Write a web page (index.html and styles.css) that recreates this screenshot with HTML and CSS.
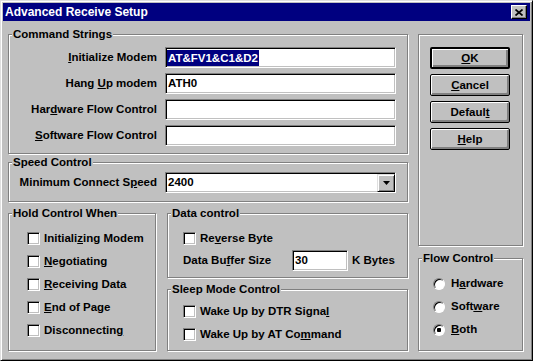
FILE: index.html
```html
<!DOCTYPE html>
<html lang="en">
<head>
  <meta charset="UTF-8" />
  <title>Advanced Receive Setup</title>
  <link rel="stylesheet" href="styles.css">
</head>
<body>

  <div class="window">
    <div class="titlebar">
      <span class="title">Advanced Receive Setup</span>
      <button class="close" type="button">
        <svg width="8" height="7" viewBox="0 0 8 7"><path d="M0.5 0.5 L7.5 6.5 M7.5 0.5 L0.5 6.5" stroke="#000" stroke-width="1.7" fill="none"/></svg>
      </button>
    </div>

    <div class="dialog">
      <div class="col_left">

        <div class="group commands">
          <div class="group_title">Command Strings</div>
          <div class="form_rows">
            <div class="form_row">
              <label><u>I</u>nitialize Modem</label>
              <div class="field"><span class="selected">AT&amp;FV1&amp;C1&amp;D2</span></div>
            </div>
            <div class="form_row">
              <label>Hang <u>U</u>p modem</label>
              <div class="field">ATH0</div>
            </div>
            <div class="form_row">
              <label>Har<u>d</u>ware Flow Control</label>
              <div class="field"></div>
            </div>
            <div class="form_row">
              <label><u>S</u>oftware Flow Control</label>
              <div class="field"></div>
            </div>
          </div>
        </div>

        <div class="group speed">
          <div class="group_title">Speed Control</div>
          <div class="form_row">
            <label>Minimum Connect S<u>p</u>eed</label>
            <div class="field dropdown">
              <span>2400</span>
              <span class="drop_btn">
                <svg width="7" height="4" viewBox="0 0 7 4"><polygon points="0,0 7,0 3.5,4" fill="#000"/></svg>
              </span>
            </div>
          </div>
        </div>

        <div class="bottom_row">
          <div class="group hold">
            <div class="group_title">Hold Control When</div>
            <div class="check_list">
              <div class="check"><span class="box"></span><span>Initiali<u>z</u>ing Modem</span></div>
              <div class="check"><span class="box"></span><span><u>N</u>egotiating</span></div>
              <div class="check"><span class="box"></span><span><u>R</u>eceiving Data</span></div>
              <div class="check"><span class="box"></span><span><u>E</u>nd of Page</span></div>
              <div class="check"><span class="box"></span><span>Disconnectin<u>g</u></span></div>
            </div>
          </div>

          <div class="stack">
            <div class="group data">
              <div class="group_title">Data control</div>
              <div class="check_list">
                <div class="check"><span class="box"></span><span>Re<u>v</u>erse Byte</span></div>
                <div class="buffer_row">
                  <span class="buffer_label">Data Bu<u>f</u>fer Size</span>
                  <div class="field small">30</div>
                  <span class="unit">K Bytes</span>
                </div>
              </div>
            </div>

            <div class="group sleep">
              <div class="group_title">Sleep Mode Control</div>
              <div class="check_list">
                <div class="check"><span class="box"></span><span>Wake Up by DTR Signa<u>l</u></span></div>
                <div class="check"><span class="box"></span><span>Wake Up by AT Co<u>m</u>mand</span></div>
              </div>
            </div>
          </div>
        </div>

      </div>

      <div class="col_right">
        <div class="group buttons">
          <button class="btn btn_default" type="button"><u>O</u>K</button>
          <button class="btn" type="button"><u>C</u>ancel</button>
          <button class="btn" type="button">Defaul<u>t</u></button>
          <button class="btn" type="button"><u>H</u>elp</button>
        </div>

        <div class="group flow">
          <div class="group_title">Flow Control</div>
          <div class="check_list radios">
            <div class="check"><span class="radio"></span><span>H<u>a</u>rdware</span></div>
            <div class="check"><span class="radio"></span><span>Soft<u>w</u>are</span></div>
            <div class="check"><span class="radio checked"></span><span><u>B</u>oth</span></div>
          </div>
        </div>
      </div>
    </div>
  </div>

</body>
</html>
```

FILE: styles.css
```css
* {
  box-sizing: border-box;
}

body {
  margin: 0;
  padding: 0;
  background-color: #c0c0c0;
}

.window {
  width: 533px;
  height: 361px;
  display: flex;
  flex-direction: column;
  padding: 2px;
  background-color: #c0c0c0;
  border: 1px solid;
  border-color: #dfdfdf #000 #000 #dfdfdf;
  box-shadow: inset 1px 1px #fff, inset -1px -1px #808080;
  font: bold 11.5px/13px "Liberation Sans", Arial, sans-serif;
  color: #000;
}

/* barra de titulo */
.titlebar {
  height: 18px;
  flex: none;
  display: flex;
  align-items: center;
  justify-content: space-between;
  padding: 0 3px 0 2px;
  background-color: #000080;
  color: #fff;
  font-size: 12px;
}

.close {
  width: 16px;
  height: 14px;
  padding: 0;
  display: flex;
  align-items: center;
  justify-content: center;
  background-color: #c0c0c0;
  border: 1px solid;
  border-color: #fff #000 #000 #fff;
  box-shadow: inset -1px -1px #808080;
}

/* cuerpo del dialogo */
.dialog {
  flex: 1;
  display: flex;
  gap: 10px;
  padding: 13px 0 0 5px;
}

.col_left {
  width: 400px;
  display: flex;
  flex-direction: column;
}

.col_right {
  width: 105px;
  display: flex;
  flex-direction: column;
}

.group {
  border: 1px solid #808080;
  box-shadow: inset 1px 1px #fff, 1px 1px #fff;
}

.group_title {
  width: fit-content;
  margin: -7px 0 0 3px;
  padding: 0 1px;
  background-color: #c0c0c0;
}

.commands {
  height: 120px;
}

.form_rows {
  display: flex;
  flex-direction: column;
  gap: 5px;
  margin-top: 6px;
}

.form_row {
  display: grid;
  grid-template-columns: 148px 231px;
  column-gap: 8px;
  align-items: center;
}

.form_row label {
  text-align: right;
}

.field {
  height: 21px;
  display: flex;
  align-items: center;
  padding: 0 2px;
  background-color: #fff;
  border: 1px solid;
  border-color: #808080 #fff #fff #808080;
  box-shadow: inset 1px 1px #000, inset -1px -1px #c0c0c0;
}

.selected {
  margin-left: -1px;
  padding: 0 1px;
  line-height: 16px;
  background-color: #000080;
  color: #fff;
}

.speed {
  height: 40px;
  margin-top: 8px;
}

.speed .form_row {
  margin-top: 3px;
}

.dropdown {
  justify-content: space-between;
  padding-right: 0;
}

.drop_btn {
  width: 18px;
  align-self: stretch;
  margin-top: 1px;
  display: flex;
  align-items: center;
  justify-content: center;
  background-color: #c0c0c0;
  border: 1px solid;
  border-color: #dfdfdf #000 #000 #dfdfdf;
  box-shadow: inset 1px 1px #fff, inset -1px -1px #808080;
}

.bottom_row {
  display: flex;
  gap: 11px;
  margin-top: 11px;
}

.hold {
  width: 148px;
  height: 138px;
}

.stack {
  width: 241px;
  display: flex;
  flex-direction: column;
}

.data {
  height: 65px;
}

.sleep {
  height: 62px;
  margin-top: 11px;
}

.check_list {
  display: flex;
  flex-direction: column;
  margin-top: 7px;
  padding-left: 18px;
}

.data .check_list,
.sleep .check_list {
  padding-left: 15px;
}

.sleep .check_list {
  margin-top: 4px;
}

.check {
  height: 23px;
  display: flex;
  align-items: center;
  gap: 4px;
}

.box {
  width: 13px;
  height: 13px;
  flex: none;
  background-color: #fff;
  border: 1px solid;
  border-color: #808080 #fff #fff #808080;
  box-shadow: inset 1px 1px #000, inset -1px -1px #c0c0c0;
}

.buffer_row {
  height: 21px;
  display: flex;
  align-items: center;
}

.buffer_label {
  width: 109px;
}

.field.small {
  width: 56px;
  padding-left: 2px;
}

.unit {
  margin-left: 4px;
}

/* botones */
.buttons {
  height: 212px;
  display: flex;
  flex-direction: column;
  gap: 5px;
  padding: 12px 0 0 11px;
}

.btn {
  width: 80px;
  height: 22px;
  padding: 0;
  font: inherit;
  color: #000;
  background-color: #c0c0c0;
  border: 1px solid #000;
  border-radius: 2px;
  box-shadow: inset 1px 1px #fff, inset -1px -1px #808080, inset -2px -2px #808080;
}

.btn_default {
  border-width: 2px;
}

.flow {
  height: 93px;
  margin-top: 12px;
}

.radios {
  padding-left: 14px;
}

.radios .check {
  gap: 6px;
}

.radio {
  width: 12px;
  height: 12px;
  flex: none;
  border-radius: 50%;
  background-color: #fff;
  border: 1px solid;
  border-color: #808080 #fff #fff #808080;
  box-shadow: inset 1px 1px #000;
}

.radio.checked {
  background: radial-gradient(circle, #000 0 2px, #fff 2.5px);
}
```
